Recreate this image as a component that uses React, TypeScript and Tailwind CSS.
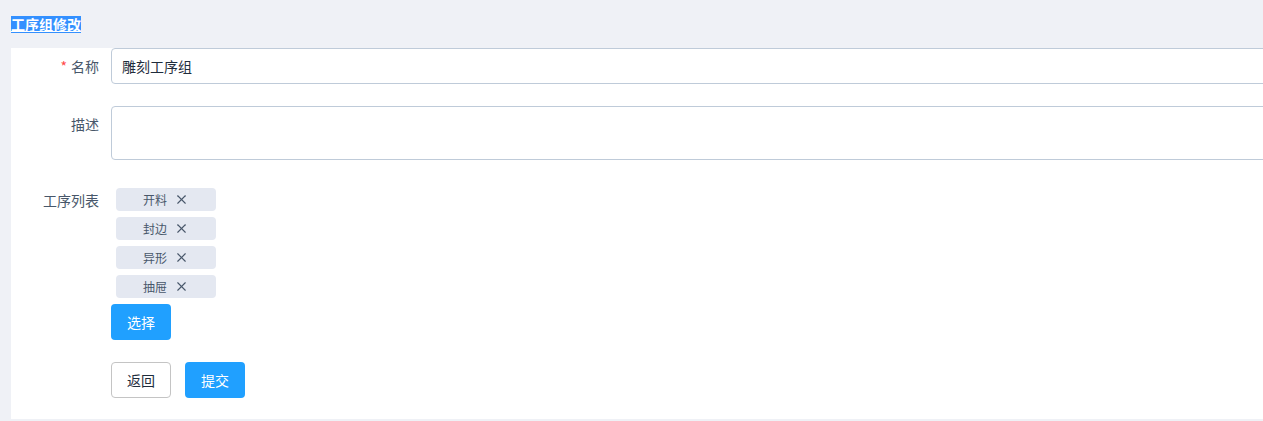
import { X } from 'lucide-react';

const steps = ['开料', '封边', '异形', '抽屉'];

const font = { fontFamily: '"Noto Sans CJK SC", "Liberation Sans", sans-serif' };

const FormItem = ({
  label,
  required,
  children,
  className = '',
}: {
  label: string;
  required?: boolean;
  children: React.ReactNode;
  className?: string;
}) => (
  <div className={`flex ${className}`}>
    <label className="w-[100px] shrink-0 pr-3 pt-[10px] text-right text-[14px] leading-[16px] text-[#48576a]">
      {required && <span className="mr-1 text-[#ff4949]">*</span>}
      {label}
    </label>
    <div className="flex-1">{children}</div>
  </div>
);

export default function App() {
  return (
    <div className="h-[421px] overflow-hidden bg-[#eff1f6] pt-4" style={font}>
      <div className="flex h-[17px] pl-[11px]">
        <span className="inline-block h-[17px] bg-[#3390ff] text-[14px] leading-[17px] font-bold text-white underline">
          工序组修改
        </span>
      </div>

      <div className="mt-[15px] ml-[11px] w-[1300px] bg-white pb-[21px]">
        <FormItem label="名称" required className="mb-[22px]">
          <div className="flex h-[36px] items-center rounded border border-[#bfcbd9] px-[10px] text-[14px] text-[#1f2d3d]">
            雕刻工序组
          </div>
        </FormItem>

        <FormItem label="描述" className="mb-[22px]">
          <div className="h-[54px] rounded border border-[#bfcbd9]" />
        </FormItem>

        <FormItem label="工序列表" className="mb-[22px]">
          <div className="flex flex-col gap-[6px] pt-[6px]">
            {steps.map((s) => (
              <div
                key={s}
                className="ml-[5px] flex h-[23px] w-[100px] items-center justify-center gap-[7px] rounded bg-[#e4e8f1] text-[12px] text-[#48576a]"
              >
                <span>{s}</span>
                <X className="h-[15px] w-[15px]" strokeWidth={1.8} />
              </div>
            ))}
            <button className="flex h-[36px] w-[60px] items-center justify-center rounded bg-[#20a0ff] text-[14px] text-white">
              选择
            </button>
          </div>
        </FormItem>

        <div className="flex gap-[14px] pl-[100px]">
          <button className="flex h-[36px] w-[60px] items-center justify-center rounded border border-[#c4c4c4] bg-white text-[14px] text-[#1f2d3d]">
            返回
          </button>
          <button className="flex h-[36px] w-[60px] items-center justify-center rounded bg-[#20a0ff] text-[14px] text-white">
            提交
          </button>
        </div>
      </div>
    </div>
  );
}
